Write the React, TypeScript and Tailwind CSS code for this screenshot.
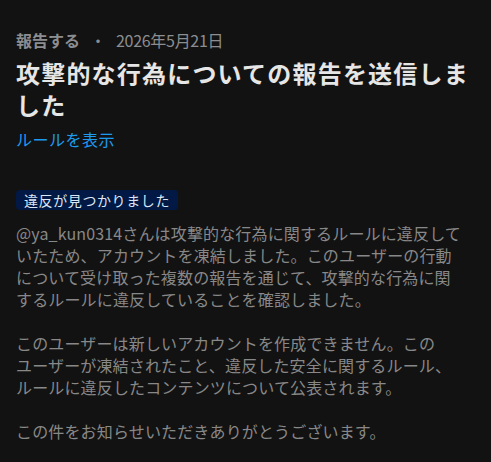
const body = [
  [
    "@ya_kun0314さんは攻撃的な行為に関するルールに違反して",
    "いたため、アカウントを凍結しました。このユーザーの行動",
    "について受け取った複数の報告を通じて、攻撃的な行為に関",
    "するルールに違反していることを確認しました。",
  ],
  [
    "このユーザーは新しいアカウントを作成できません。この",
    "ユーザーが凍結されたこと、違反した安全に関するルール、",
    "ルールに違反したコンテンツについて公表されます。",
  ],
  ["この件をお知らせいただきありがとうございます。"],
];

const ReportNotice = () => {
  return (
    <div className="min-h-[462px] w-full bg-[#121212] px-4 pt-[29px] font-['Noto_Sans_CJK_JP',sans-serif]">
      {/* Meta line */}
      <div className="flex items-center text-[16px] leading-[22px] text-[#8b8d90]">
        <span className="font-bold">報告する</span>
        <span className="ml-[10px] mr-[10px]">・</span>
        <span className="tracking-[-0.3px]">2026年5月21日</span>
      </div>

      <h1 className="mt-[6px] text-[24px] font-bold leading-[32px] tracking-[1.2px] text-[#e6e6e6]">
        攻撃的な行為についての報告を送信しま
        <br />
        した
      </h1>

      <a className="mt-[7px] block text-[16px] leading-[22px] tracking-[0.5px] text-[#1d9bf0]">
        ルールを表示
      </a>

      {/* Status badge */}
      <div className="mt-[40px] inline-flex h-[20px] items-center rounded-[4px] bg-[#021845] px-[8px] text-[14px] tracking-[0.6px] text-[#dbe7f5]">
        違反が見つかりました
      </div>

      <div className="mt-[11px] flex flex-col gap-[22px] text-[16px] leading-[22px] tracking-[0.15px] text-[#888888]">
        {body.map((para, i) => (
          <p key={i}>
            {para.map((line) => (
              <span key={line} className="block whitespace-nowrap">
                {line}
              </span>
            ))}
          </p>
        ))}
      </div>
    </div>
  );
};

export default function App() {
  return <ReportNotice />;
}
